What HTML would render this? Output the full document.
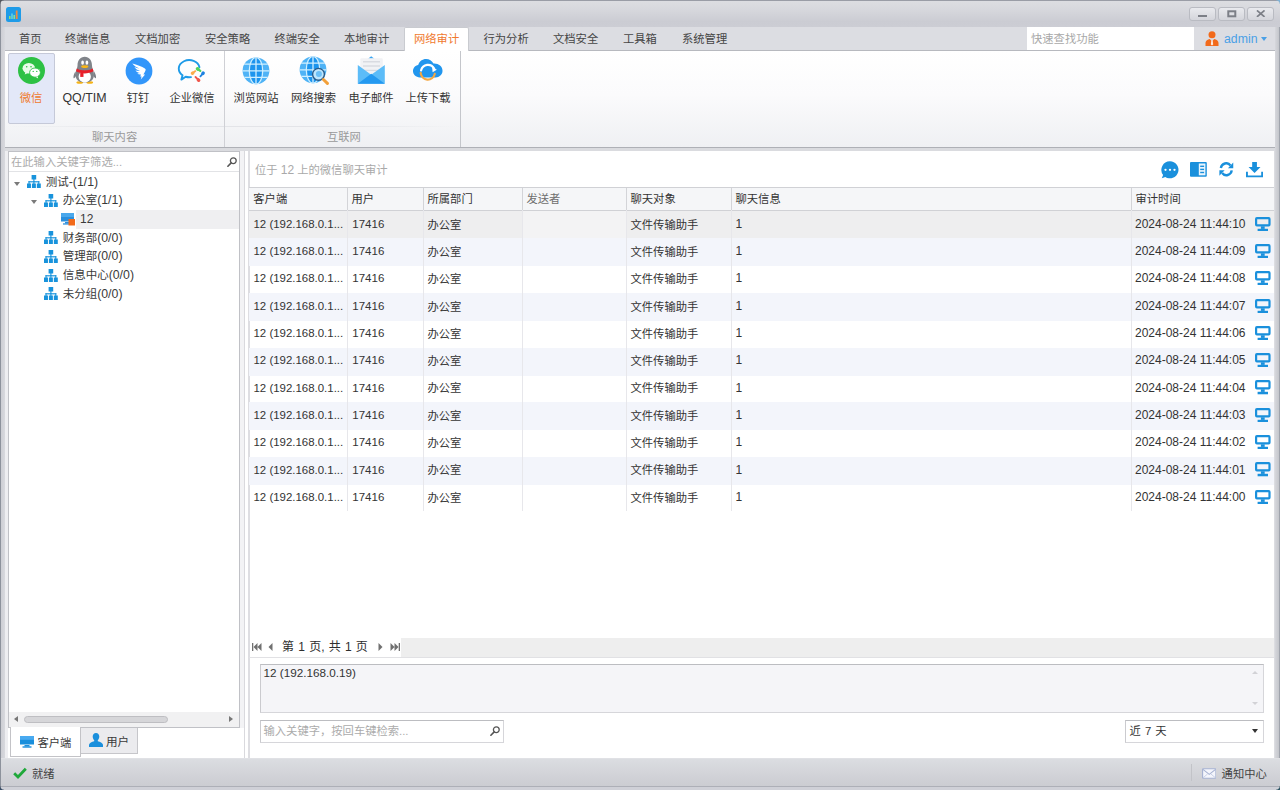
<!DOCTYPE html>
<html lang="zh-CN">
<head>
<meta charset="utf-8">
<title>网络审计 - 微信聊天审计</title>
<style>
*{box-sizing:border-box;margin:0;padding:0}
html,body{width:1280px;height:790px;overflow:hidden}
body{position:relative;background:#d4d5da;font-family:"Liberation Sans","Noto Sans CJK SC",sans-serif;font-size:11.3px;color:#3a3a3a;line-height:1}
div,span,svg{position:absolute}
.t{white-space:nowrap;height:14px;line-height:14px}
.l{font-size:12px}
.s{position:static;font-size:12.300px}
#titlebar{left:0;top:0;width:1280px;height:27px;background:linear-gradient(#dddee2,#d8d9de 30%,#cbccd3 80%,#cccdd4)}
#tabrow{left:5px;top:27px;width:1270px;height:24px;background:#dcdde2;border-bottom:1px solid #b7b9bf}
#tabact{left:404px;top:27px;width:65px;height:24px;background:#fff;border:1px solid #c9cbd0;border-bottom:none;border-radius:2px 2px 0 0}
.tab{top:31.800px;color:#454545}
#ribbon{left:5px;top:51px;width:1270px;height:97px;background:linear-gradient(#ffffff,#fbfbfc 45%,#eff0f3);border-bottom:1px solid #aeb0b6}
.rlabel{top:130px;color:#9a9a9a}
.rbtn{top:91px;color:#333}
.vsep{top:51px;width:1px;height:96px;background:#cfd0d5}
#left{left:8px;top:151px;width:232px;height:577px;background:#fff;border:1px solid #c0c1c6}
#right{left:249px;top:150px;width:1025px;height:608px;background:#fff}
#status{left:0;top:758px;width:1280px;height:32px;background:linear-gradient(#dbdde1,#d2d3d8 50%,#c9cad0);border-top:1px solid #e0e1e5}
.th{top:188px;height:22px;background:#f5f6f8;border-right:1px solid #d5d6da}
.tht{top:192px;color:#333}
.row{left:249px;width:1025px;height:28px}
.c{color:#333}
.csep{top:210px;width:1px;height:301px;background:#e7e7eb}
</style>
</head>
<body>
<div id="titlebar"></div>
<div style="left:0;top:0;width:1280px;height:1px;background:#9a9da6"></div>
<div style="left:0;top:0;width:1px;height:790px;background:#8d929c"></div>
<div style="left:1px;top:27px;width:4px;height:763px;background:linear-gradient(90deg,#cdced4,#d8d9de)"></div>
<div style="left:1275px;top:27px;width:5px;height:763px;background:linear-gradient(90deg,#d6d7dc,#c6c8cd 70%,#8d929c)"></div>
<svg style="left:5.800px;top:6.500px" width="15" height="15" viewBox="0 0 15 15"><rect width="15" height="15" rx="2.5" fill="#1e9be8"/><rect x="3" y="9" width="1.6" height="3" fill="#8fe07a"/><rect x="5.2" y="6.5" width="1.6" height="5.5" fill="#5fd0e8"/><rect x="7.4" y="8" width="1.6" height="4" fill="#7fe0a0"/><rect x="9.8" y="3.5" width="1.8" height="8.5" fill="#f08a3c"/></svg>
<div style="left:1189px;top:7px;width:27px;height:14px;border:1px solid #b9bbc2;border-radius:3px;background:linear-gradient(#e9eaee,#d4d5db)"></div>
<div style="left:1218px;top:7px;width:27px;height:14px;border:1px solid #b9bbc2;border-radius:3px;background:linear-gradient(#e9eaee,#d4d5db)"></div>
<div style="left:1247px;top:7px;width:27px;height:14px;border:1px solid #b9bbc2;border-radius:3px;background:linear-gradient(#e9eaee,#d4d5db)"></div>
<div style="left:1198px;top:14.500px;width:8.500px;height:2px;background:#7c7f87"></div>
<svg style="left:1227px;top:9.700px" width="10" height="8" viewBox="0 0 10 8"><rect x="1.300" y="1.300" width="7" height="5" fill="none" stroke="#7c7f87" stroke-width="2"/></svg>
<svg style="left:1256px;top:9.800px" width="9.500" height="7.300" viewBox="0 0 10 8" preserveAspectRatio="none"><path d="M1 0.5L9 7.5M9 0.5L1 7.5" stroke="#7c7f87" stroke-width="1.900" fill="none"/></svg>
<div id="tabrow"></div>
<div id="tabact"></div>
<span class="t tab" style="left:19px">首页</span>
<span class="t tab" style="left:65px">终端信息</span>
<span class="t tab" style="left:135px">文档加密</span>
<span class="t tab" style="left:205px">安全策略</span>
<span class="t tab" style="left:274.5px">终端安全</span>
<span class="t tab" style="left:344px">本地审计</span>
<span class="t tab" style="left:414px;color:#f0792e">网络审计</span>
<span class="t tab" style="left:483.5px">行为分析</span>
<span class="t tab" style="left:553px">文档安全</span>
<span class="t tab" style="left:623px">工具箱</span>
<span class="t tab" style="left:682px">系统管理</span>
<div style="left:1027px;top:27px;width:167px;height:23px;background:#fff"></div>
<span class="t" style="left:1031px;top:32px;color:#a8a8a8">快速查找功能</span>
<svg style="left:1205px;top:31px" width="14" height="15" viewBox="0 0 14 15"><circle cx="7" cy="3.7" r="3.5" fill="#f26a1b"/><path d="M0.5 15v-3.2c0-2.2 2.2-3.6 4.2-3.9L7 10.2 9.3 7.9c2 .3 4.2 1.700 4.200 3.900V15z" fill="#f26a1b"/><path d="M6.300 9.500h1.400l.5 4-1.200 1-1.200-1z" fill="#fff" opacity=".85"/></svg>
<span class="t" style="left:1224px;top:31.700px;font-size:12.300px;color:#4aa0e6">admin</span>
<div style="left:1261px;top:37px;width:0;height:0;border-left:3.5px solid transparent;border-right:3.5px solid transparent;border-top:4px solid #4aa0e6"></div>
<div id="ribbon"></div>
<div style="left:5px;top:126px;width:455px;height:1px;background:linear-gradient(90deg,rgba(220,221,226,0),#e3e4e8 30%,#e3e4e8 70%,rgba(220,221,226,0))"></div>
<div class="vsep" style="left:224px"></div>
<div class="vsep" style="left:460px;background:#c4c6cb"></div>
<div style="left:8px;top:53px;width:47px;height:71px;background:#e3e8f8;border:1px solid #c5c9d8;border-radius:2px"></div>
<span class="t rbtn" style="left:-9px;width:80px;text-align:center;color:#f0792e">微信</span>
<span class="t rbtn" style="left:44.5px;width:80px;text-align:center;font-size:12.400px">QQ/TIM</span>
<span class="t rbtn" style="left:98px;width:80px;text-align:center">钉钉</span>
<span class="t rbtn" style="left:152px;width:80px;text-align:center">企业微信</span>
<span class="t rbtn" style="left:216px;width:80px;text-align:center">浏览网站</span>
<span class="t rbtn" style="left:273.5px;width:80px;text-align:center">网络搜索</span>
<span class="t rbtn" style="left:331px;width:80px;text-align:center">电子邮件</span>
<span class="t rbtn" style="left:388px;width:80px;text-align:center">上传下载</span>
<span class="t rlabel" style="left:92px">聊天内容</span>
<span class="t rlabel" style="left:327px">互联网</span>
<svg style="left:17px;top:56px" width="29" height="29" viewBox="0 0 29 29"><circle cx="14.500" cy="14.500" r="13.500" fill="#2dc144"/><ellipse cx="11.800" cy="12.200" rx="6.300" ry="5.300" fill="#eafbe9"/><path d="M8.500 16l-.8 2.600 2.900-1.500z" fill="#eafbe9"/><ellipse cx="18" cy="16.600" rx="5.400" ry="4.600" fill="#fff" stroke="#2dc144" stroke-width=".9"/><path d="M20.500 20.300l.7 2.100-2.500-1.300z" fill="#fff"/><circle cx="9.700" cy="10.700" r=".8" fill="#2dc144"/><circle cx="14" cy="10.700" r=".8" fill="#2dc144"/><circle cx="16.200" cy="15.400" r=".7" fill="#2dc144"/><circle cx="19.800" cy="15.400" r=".7" fill="#2dc144"/></svg>
<svg style="left:73px;top:56px" width="23.500" height="28.500" viewBox="0 0 26 29" preserveAspectRatio="none"><ellipse cx="7.500" cy="27" rx="3.800" ry="1.300" fill="#f5b316"/><ellipse cx="18.500" cy="27" rx="3.800" ry="1.300" fill="#f5b316"/><path d="M2.800 15.500c-1.600 2.200-2.600 5-2.200 6.800.5 1 1.800-.5 2.800-2.200z" fill="#7d8187"/><path d="M23.200 15.500c1.600 2.200 2.600 5 2.200 6.800-.5 1-1.800-.5-2.800-2.200z" fill="#7d8187"/><path d="M13 .8c5 0 8 3.800 8 8.700 0 1.500.5 3 1.300 5 1.200 3 1.400 6.500-.4 9.200-1.700 2.400-5 3.300-8.900 3.300s-7.200-.9-8.900-3.300c-1.800-2.700-1.600-6.200-.4-9.200.8-2 1.300-3.500 1.300-5C5 4.600 8 .8 13 .8z" fill="#80848a"/><ellipse cx="13" cy="21" rx="6.800" ry="6" fill="#fff"/><ellipse cx="10.600" cy="6.800" rx="1.500" ry="2.200" fill="#fff"/><ellipse cx="15.400" cy="6.800" rx="1.500" ry="2.200" fill="#fff"/><ellipse cx="13" cy="10.800" rx="4" ry="1.500" fill="#f8b616"/><path d="M4.200 12.600c3 1.500 6 2 8.800 2s5.800-.5 8.800-2l.9 3c-3 1.500-6.500 2.100-9.700 2.100s-6.700-.6-9.700-2.100z" fill="#e8202a"/><path d="M8 16.700h3.600v4.600H8z" fill="#e8202a"/></svg>
<svg style="left:124.700px;top:56.500px" width="28" height="28" viewBox="0 0 28 28"><circle cx="14" cy="14" r="13.400" fill="#3296fa"/><path d="M7.300 6.600c4.500 1.300 9.600 3.200 12.600 4.900.8.500.9 1.100.6 1.900-.5 1.300-1.300 2.900-2.100 4.200h1.700l-4.300 5 .8-3.200h-1.400l.8-1.900c-1.200.3-2.600 0-3.800-1 1.100 0 2.200-.2 3-.5-1.800-.1-3.600-.8-4.800-2.400 1.600.4 3.300.5 4.700.3-2.500-.6-4.600-1.900-5.700-3.900 1.500.8 3.400 1.400 5 1.600-2.800-1.200-5.500-2.800-7.100-5z" fill="#fff"/></svg>
<svg style="left:177px;top:58px" width="29" height="26" viewBox="0 0 29 26"><path d="M22.440 9.200A10.400 8.600 0 1 0 5.520 17.290L4.400 21.600 8.640 18.780A10.400 8.600 0 0 0 14 19.170" fill="none" stroke="#1e9be8" stroke-width="1.900" stroke-linecap="round" stroke-linejoin="round"/><g stroke-linecap="round" fill="none"><path d="M20.800 11L23.300 12.900" stroke="#52d45c" stroke-width="2.300"/><path d="M20.400 10.700L20.900 11.100" stroke="#52d45c" stroke-width="3.400"/><path d="M26.300 15.200L23.400 18.300" stroke="#1e82e0" stroke-width="1.800"/><path d="M26.200 15.100L25.900 15.500" stroke="#1e82e0" stroke-width="3.400"/><path d="M21.600 22.200L18.500 19" stroke="#f0574c" stroke-width="1.800"/><path d="M21.700 22.300L21.300 21.900" stroke="#f0574c" stroke-width="3.400"/><path d="M15.500 15.200L18.400 13.100" stroke="#fbab4a" stroke-width="1.800"/><path d="M15.400 15.300L15.800 15" stroke="#fbab4a" stroke-width="3.400"/></g></svg>
<svg style="left:242.4px;top:56.6px" width="30" height="30" viewBox="0 0 30 30"><defs><clipPath id="g242"><circle cx="14" cy="13.800" r="13.400"/></clipPath></defs><circle cx="14" cy="13.800" r="13.400" fill="#4fb3f6"/><g clip-path="url(#g242)"><ellipse cx="14" cy="13.800" rx="6.700" ry="13.400" fill="#1d95ee"/><g stroke="#cfefff" stroke-width="1.300" fill="none"><path d="M0 13.800h28M14 0v28M1 7.200h26M1 20.400h26"/><ellipse cx="14" cy="13.800" rx="6.700" ry="13.400"/></g></g></svg>
<svg style="left:298.6px;top:56.4px" width="30" height="30" viewBox="0 0 30 30"><defs><clipPath id="g298"><circle cx="14" cy="13.800" r="13.400"/></clipPath></defs><circle cx="14" cy="13.800" r="13.400" fill="#4fb3f6"/><g clip-path="url(#g298)"><ellipse cx="14" cy="13.800" rx="6.700" ry="13.400" fill="#1d95ee"/><g stroke="#cfefff" stroke-width="1.300" fill="none"><path d="M0 13.800h28M14 0v28M1 7.200h26M1 20.400h26"/><ellipse cx="14" cy="13.800" rx="6.700" ry="13.400"/></g></g><circle cx="19.500" cy="18.300" r="5.900" fill="#bfe6fd" stroke="#2a5a88" stroke-width="1.400"/><circle cx="19.900" cy="18.100" r="3" fill="#6cc0f7"/><path d="M24.400 23.500l4 3.900" stroke="#f2a03a" stroke-width="3" stroke-linecap="round"/></svg>
<svg style="left:357px;top:55px" width="29" height="30" viewBox="0 0 29 30"><path d="M14.200 1.200L17.400 3.800h-6.400z" fill="#3aa5f2"/><rect x="3.300" y="3.300" width="22.500" height="19" rx="1.200" fill="#f1f2f5"/><path d="M6 6.800h17M6 11h17M6 15.400h17" stroke="#d9dbe1" stroke-width="1.400"/><path d="M.8 10l13.400 9.800 13.600-9.800v18.700H.8z" fill="#5cbcf8"/><path d="M.8 28.700l13.400-9.900 13.600 9.900z" fill="#2499f0"/></svg>
<svg style="left:412.300px;top:58.300px" width="31.500" height="26.200" viewBox="0 0 32 25" preserveAspectRatio="none"><path d="M8 18.500c-4 0-7-2.600-7-6 0-3 2.300-5.300 5.300-5.800C7.400 3.200 10.500 1 14.300 1c3.300 0 6.100 1.700 7.500 4.300 4.800-.4 9.200 2.600 9.200 6.800 0 3.700-3.300 6.400-7 6.400z" fill="#2196ee"/><path d="M8.800 14.200a7.300 7.300 0 0 0 14.300 1" fill="none" stroke="#f5a742" stroke-width="2.200" stroke-linecap="round"/><path d="M9.200 11.800a7.300 7.300 0 0 1 13.300-1.600" fill="none" stroke="#fff" stroke-width="2.200" stroke-linecap="round"/><path d="M20.500 8.500l4.700 2.700-4.300 2.500z" fill="#fff"/></svg>
<div style="left:5px;top:148px;width:1270px;height:3px;background:#dadbdf"></div>
<div style="left:5px;top:151px;width:1270px;height:607.500px;background:#fff"></div>
<div style="left:5px;top:151px;width:3px;height:607px;background:#eeeef1"></div>
<div id="left"></div>
<div style="left:9px;top:171px;width:230px;height:1px;background:#e2e3e6"></div>
<span class="t" style="left:11px;top:155px;color:#acacac">在此输入关键字筛选...</span>
<svg style="left:226.700px;top:156.800px" width="10" height="10" viewBox="0 0 10 10"><circle cx="6.300" cy="3.700" r="2.900" fill="none" stroke="#555" stroke-width="1.300"/><path d="M4.200 5.900L.9 9.200" stroke="#555" stroke-width="1.600" stroke-linecap="round"/></svg>
<div style="left:76px;top:210px;width:163px;height:19px;background:#efeff1"></div>
<svg style="left:27px;top:175px" width="13.800" height="13" viewBox="0 0 15 13" preserveAspectRatio="none"><g fill="#1893dc"><rect x="5" y="0" width="5" height="4.500"/><rect x="0" y="8.500" width="4.300" height="4.500"/><rect x="5.350" y="8.500" width="4.300" height="4.500"/><rect x="10.700" y="8.500" width="4.300" height="4.500"/><rect x="6.900" y="4" width="1.200" height="3"/><rect x="1.600" y="6.200" width="11.800" height="1.200"/><rect x="1.600" y="6.200" width="1.200" height="3"/><rect x="12.200" y="6.200" width="1.200" height="3"/><rect x="6.900" y="6.200" width="1.200" height="3"/></g></svg>
<div style="left:13.5px;top:181.5px;width:0;height:0;border-left:3.500px solid transparent;border-right:3.500px solid transparent;border-top:4px solid #7a7a7a"></div>
<span class="t" style="left:45.7px;top:174.5px;font-size:11.500px">测试<span class="s">-(1/1)</span></span>
<svg style="left:44px;top:193.7px" width="13.800" height="13" viewBox="0 0 15 13" preserveAspectRatio="none"><g fill="#1893dc"><rect x="5" y="0" width="5" height="4.500"/><rect x="0" y="8.500" width="4.300" height="4.500"/><rect x="5.350" y="8.500" width="4.300" height="4.500"/><rect x="10.700" y="8.500" width="4.300" height="4.500"/><rect x="6.900" y="4" width="1.200" height="3"/><rect x="1.600" y="6.200" width="11.800" height="1.200"/><rect x="1.600" y="6.200" width="1.200" height="3"/><rect x="12.200" y="6.200" width="1.200" height="3"/><rect x="6.900" y="6.200" width="1.200" height="3"/></g></svg>
<div style="left:30.5px;top:200.2px;width:0;height:0;border-left:3.500px solid transparent;border-right:3.500px solid transparent;border-top:4px solid #7a7a7a"></div>
<span class="t" style="left:62.7px;top:193.2px;font-size:11.500px">办公室<span class="s">(1/1)</span></span>
<svg style="left:44px;top:231.2px" width="13.800" height="13" viewBox="0 0 15 13" preserveAspectRatio="none"><g fill="#1893dc"><rect x="5" y="0" width="5" height="4.500"/><rect x="0" y="8.500" width="4.300" height="4.500"/><rect x="5.350" y="8.500" width="4.300" height="4.500"/><rect x="10.700" y="8.500" width="4.300" height="4.500"/><rect x="6.900" y="4" width="1.200" height="3"/><rect x="1.600" y="6.200" width="11.800" height="1.200"/><rect x="1.600" y="6.200" width="1.200" height="3"/><rect x="12.200" y="6.200" width="1.200" height="3"/><rect x="6.900" y="6.200" width="1.200" height="3"/></g></svg>
<span class="t" style="left:62.7px;top:230.7px;font-size:11.500px">财务部<span class="s">(0/0)</span></span>
<svg style="left:44px;top:249.9px" width="13.800" height="13" viewBox="0 0 15 13" preserveAspectRatio="none"><g fill="#1893dc"><rect x="5" y="0" width="5" height="4.500"/><rect x="0" y="8.500" width="4.300" height="4.500"/><rect x="5.350" y="8.500" width="4.300" height="4.500"/><rect x="10.700" y="8.500" width="4.300" height="4.500"/><rect x="6.900" y="4" width="1.200" height="3"/><rect x="1.600" y="6.200" width="11.800" height="1.200"/><rect x="1.600" y="6.200" width="1.200" height="3"/><rect x="12.200" y="6.200" width="1.200" height="3"/><rect x="6.900" y="6.200" width="1.200" height="3"/></g></svg>
<span class="t" style="left:62.7px;top:249.4px;font-size:11.500px">管理部<span class="s">(0/0)</span></span>
<svg style="left:44px;top:268.6px" width="13.800" height="13" viewBox="0 0 15 13" preserveAspectRatio="none"><g fill="#1893dc"><rect x="5" y="0" width="5" height="4.500"/><rect x="0" y="8.500" width="4.300" height="4.500"/><rect x="5.350" y="8.500" width="4.300" height="4.500"/><rect x="10.700" y="8.500" width="4.300" height="4.500"/><rect x="6.900" y="4" width="1.200" height="3"/><rect x="1.600" y="6.200" width="11.800" height="1.200"/><rect x="1.600" y="6.200" width="1.200" height="3"/><rect x="12.200" y="6.200" width="1.200" height="3"/><rect x="6.900" y="6.200" width="1.200" height="3"/></g></svg>
<span class="t" style="left:62.7px;top:268.1px;font-size:11.500px">信息中心<span class="s">(0/0)</span></span>
<svg style="left:44px;top:287.3px" width="13.800" height="13" viewBox="0 0 15 13" preserveAspectRatio="none"><g fill="#1893dc"><rect x="5" y="0" width="5" height="4.500"/><rect x="0" y="8.500" width="4.300" height="4.500"/><rect x="5.350" y="8.500" width="4.300" height="4.500"/><rect x="10.700" y="8.500" width="4.300" height="4.500"/><rect x="6.900" y="4" width="1.200" height="3"/><rect x="1.600" y="6.200" width="11.800" height="1.200"/><rect x="1.600" y="6.200" width="1.200" height="3"/><rect x="12.200" y="6.200" width="1.200" height="3"/><rect x="6.900" y="6.200" width="1.200" height="3"/></g></svg>
<span class="t" style="left:62.7px;top:286.8px;font-size:11.500px">未分组<span class="s">(0/0)</span></span>
<svg style="left:61px;top:213px" width="14" height="13" viewBox="0 0 14 13"><rect x="0" y="0" width="13" height="8.500" fill="#2a8fdd"/><rect x="0" y="0" width="13" height="4" fill="#4aa8ec"/><rect x="4" y="9" width="5" height="1.500" fill="#2a8fdd"/><rect x="2" y="10.300" width="9" height="1.300" fill="#2a8fdd"/><rect x="7.500" y="6" width="6.500" height="6.500" fill="#f26a1b"/></svg>
<span class="t l" style="left:80px;top:212px">12</span>
<div style="left:9px;top:712px;width:230px;height:15px;background:#f1f1f2"></div>
<div style="left:24px;top:716px;width:144px;height:7px;background:#d6d6d9;border:1px solid #bebec2;border-radius:4px"></div>
<div style="left:14px;top:716px;width:0;height:0;border-top:3.500px solid transparent;border-bottom:3.500px solid transparent;border-right:4px solid #777"></div>
<div style="left:229px;top:716px;width:0;height:0;border-top:3.500px solid transparent;border-bottom:3.500px solid transparent;border-left:4px solid #777"></div>
<div style="left:80px;top:728px;width:58px;height:26px;background:#ebebee;border:1px solid #c6c6ca;border-top:none"></div>
<div style="left:10px;top:727px;width:71px;height:29.500px;background:#fff;border:1px solid #c3c3c7;border-top:none"></div>
<svg style="left:20px;top:736px" width="14" height="12" viewBox="0 0 14 12"><rect x="0" y="0" width="14" height="8.500" fill="#1a8fdc"/><rect x="0" y="0" width="14" height="3.800" fill="#49aaf0"/><rect x="4.500" y="9" width="5" height="1.500" fill="#1a8fdc"/><rect x="2.500" y="10.300" width="9" height="1.400" fill="#1a8fdc"/></svg>
<span class="t" style="left:37.500px;top:736px">客户端</span>
<svg style="left:89px;top:733px" width="14" height="14" viewBox="0 0 14 14"><path d="M7 0c2 0 3.300 1.500 3.300 3.600 0 1.500-.6 2.900-1.500 3.700v1c2.400.6 4.700 1.800 5.200 3.500V14H0v-2.200c.5-1.700 2.800-2.900 5.200-3.500v-1C4.300 6.500 3.700 5.100 3.700 3.600 3.700 1.500 5 0 7 0z" fill="#1a8fdc"/></svg>
<span class="t" style="left:106px;top:734.500px;font-size:11.600px">用户</span>
<div style="left:240px;top:151px;width:4px;height:577px;background:#f3f3f5"></div>
<div style="left:244px;top:151px;width:1px;height:607px;background:#d9d9dd"></div>
<div style="left:248px;top:151px;width:1.500px;height:607px;background:#dedee2"></div>
<div style="left:1274px;top:151px;width:1px;height:607px;background:#dcdde1"></div>
<span class="t" style="left:255px;top:162.500px;color:#a9a9a9">位于 <span class="l" style="position:static">12</span> 上的微信聊天审计</span>
<svg style="left:1161px;top:161px" width="18" height="18" viewBox="0 0 18 18"><path d="M9 .3a8.500 8.500 0 1 1-4.700 15.600L.8 17.200l1.300-3.300A8.500 8.500 0 0 1 9 .3z" fill="#1a90dc"/><circle cx="4.500" cy="8.800" r="1.150" fill="#fff"/><circle cx="9" cy="8.800" r="1.150" fill="#fff"/><circle cx="13.500" cy="8.800" r="1.150" fill="#fff"/></svg>
<svg style="left:1189.800px;top:162px" width="17" height="15" viewBox="0 0 17 15"><rect x="0" y="0" width="16.800" height="14.800" rx="1" fill="#1a90dc"/><rect x="8.800" y="1.500" width="6.600" height="11.800" fill="#eaf5fd"/><g fill="#1a90dc"><rect x="10.200" y="3.600" width="3.900" height="1.400"/><rect x="10.200" y="6.700" width="3.900" height="1.400"/><rect x="10.200" y="9.800" width="3.900" height="1.400"/></g></svg>
<svg style="left:1219px;top:162.300px" width="14.600" height="14.400" viewBox="0 0 16 15" preserveAspectRatio="none"><g fill="none" stroke="#1a90dc" stroke-width="2.600"><path d="M2 6.300A6 6 0 0 1 12.600 3.600"/><path d="M14 8.700A6 6 0 0 1 3.400 11.400"/></g><path d="M15.600 .6v5.800H9.800z" fill="#1a90dc"/><path d="M.4 14.400V8.600h5.800z" fill="#1a90dc"/></svg>
<svg style="left:1245.800px;top:162px" width="17.100" height="15.700" viewBox="0 0 18 17" preserveAspectRatio="none"><path d="M6.500 0h5v5.500h3.800L9 11.800 2.700 5.500h3.800z" fill="#1a90dc"/><path d="M1 10.500v5h16v-5" fill="none" stroke="#1a90dc" stroke-width="2"/></svg>
<div style="left:249px;top:187px;width:1025px;height:1px;background:#d0d1d5"></div>
<div style="left:249px;top:188px;width:1025px;height:22px;background:#f5f6f8"></div>
<div style="left:249px;top:210px;width:1025px;height:1px;background:#d0d1d5"></div>
<div style="left:347px;top:188px;width:1px;height:22px;background:#d3d4d8"></div>
<div class="csep" style="left:347px"></div>
<div style="left:423px;top:188px;width:1px;height:22px;background:#d3d4d8"></div>
<div class="csep" style="left:423px"></div>
<div style="left:522px;top:188px;width:1px;height:22px;background:#d3d4d8"></div>
<div class="csep" style="left:522px"></div>
<div style="left:626px;top:188px;width:1px;height:22px;background:#d3d4d8"></div>
<div class="csep" style="left:626px"></div>
<div style="left:731px;top:188px;width:1px;height:22px;background:#d3d4d8"></div>
<div class="csep" style="left:731px"></div>
<div style="left:1131px;top:188px;width:1px;height:22px;background:#d3d4d8"></div>
<div class="csep" style="left:1131px"></div>
<div class="row" style="top:211.0px;background:#eeeeef"></div>
<div class="row" style="top:238.3px;background:#f3f5fb"></div>
<div class="row" style="top:293.0px;background:#f3f5fb"></div>
<div class="row" style="top:347.6px;background:#f3f5fb"></div>
<div class="row" style="top:402.2px;background:#f3f5fb"></div>
<div class="row" style="top:456.9px;background:#f3f5fb"></div>
<div style="left:523px;top:211px;width:103px;height:27px;background:rgba(255,255,255,.3)"></div>
<span class="t tht" style="left:253.3px">客户端</span>
<div class="csep" style="left:347px"></div>
<span class="t tht" style="left:351.5px">用户</span>
<div class="csep" style="left:423px"></div>
<span class="t tht" style="left:427.5px">所属部门</span>
<div class="csep" style="left:522px"></div>
<span class="t tht" style="left:526.5px;color:#6e6e6e">发送者</span>
<div class="csep" style="left:626px"></div>
<span class="t tht" style="left:630.5px">聊天对象</span>
<div class="csep" style="left:731px"></div>
<span class="t tht" style="left:735.5px">聊天信息</span>
<div class="csep" style="left:1131px"></div>
<span class="t tht" style="left:1135.5px">审计时间</span>
<span class="t c" style="left:253.500px;top:216.8px;font-size:11.450px">12 (192.168.0.1...</span><span class="t c" style="left:352.300px;top:216.8px;font-size:11.500px">17416</span><span class="t c" style="left:427.500px;top:217.5px">办公室</span><span class="t c" style="left:630.500px;top:217.5px">文件传输助手</span><span class="t l c" style="left:735.500px;top:216.8px">1</span><span class="t l c" style="left:1135px;top:216.8px">2024-08-24 11:44:10</span>
<svg style="left:1255px;top:216.5px" width="15.600" height="14.400" viewBox="0 0 15.600 14.400"><rect x="1.100" y="1.100" width="13.400" height="7.300" rx=".8" fill="none" stroke="#1a90dc" stroke-width="2.200"/><rect x="5.900" y="9.300" width="3.800" height="2.600" fill="#1a90dc"/><rect x="2.600" y="11.800" width="10.400" height="2.500" fill="#1a90dc"/></svg>
<span class="t c" style="left:253.500px;top:244.1px;font-size:11.450px">12 (192.168.0.1...</span><span class="t c" style="left:352.300px;top:244.1px;font-size:11.500px">17416</span><span class="t c" style="left:427.500px;top:244.8px">办公室</span><span class="t c" style="left:630.500px;top:244.8px">文件传输助手</span><span class="t l c" style="left:735.500px;top:244.1px">1</span><span class="t l c" style="left:1135px;top:244.1px">2024-08-24 11:44:09</span>
<svg style="left:1255px;top:243.8px" width="15.600" height="14.400" viewBox="0 0 15.600 14.400"><rect x="1.100" y="1.100" width="13.400" height="7.300" rx=".8" fill="none" stroke="#1a90dc" stroke-width="2.200"/><rect x="5.900" y="9.300" width="3.800" height="2.600" fill="#1a90dc"/><rect x="2.600" y="11.800" width="10.400" height="2.500" fill="#1a90dc"/></svg>
<span class="t c" style="left:253.500px;top:271.4px;font-size:11.450px">12 (192.168.0.1...</span><span class="t c" style="left:352.300px;top:271.4px;font-size:11.500px">17416</span><span class="t c" style="left:427.500px;top:272.1px">办公室</span><span class="t c" style="left:630.500px;top:272.1px">文件传输助手</span><span class="t l c" style="left:735.500px;top:271.4px">1</span><span class="t l c" style="left:1135px;top:271.4px">2024-08-24 11:44:08</span>
<svg style="left:1255px;top:271.1px" width="15.600" height="14.400" viewBox="0 0 15.600 14.400"><rect x="1.100" y="1.100" width="13.400" height="7.300" rx=".8" fill="none" stroke="#1a90dc" stroke-width="2.200"/><rect x="5.900" y="9.300" width="3.800" height="2.600" fill="#1a90dc"/><rect x="2.600" y="11.800" width="10.400" height="2.500" fill="#1a90dc"/></svg>
<span class="t c" style="left:253.500px;top:298.8px;font-size:11.450px">12 (192.168.0.1...</span><span class="t c" style="left:352.300px;top:298.8px;font-size:11.500px">17416</span><span class="t c" style="left:427.500px;top:299.5px">办公室</span><span class="t c" style="left:630.500px;top:299.5px">文件传输助手</span><span class="t l c" style="left:735.500px;top:298.8px">1</span><span class="t l c" style="left:1135px;top:298.8px">2024-08-24 11:44:07</span>
<svg style="left:1255px;top:298.5px" width="15.600" height="14.400" viewBox="0 0 15.600 14.400"><rect x="1.100" y="1.100" width="13.400" height="7.300" rx=".8" fill="none" stroke="#1a90dc" stroke-width="2.200"/><rect x="5.900" y="9.300" width="3.800" height="2.600" fill="#1a90dc"/><rect x="2.600" y="11.800" width="10.400" height="2.500" fill="#1a90dc"/></svg>
<span class="t c" style="left:253.500px;top:326.1px;font-size:11.450px">12 (192.168.0.1...</span><span class="t c" style="left:352.300px;top:326.1px;font-size:11.500px">17416</span><span class="t c" style="left:427.500px;top:326.8px">办公室</span><span class="t c" style="left:630.500px;top:326.8px">文件传输助手</span><span class="t l c" style="left:735.500px;top:326.1px">1</span><span class="t l c" style="left:1135px;top:326.1px">2024-08-24 11:44:06</span>
<svg style="left:1255px;top:325.8px" width="15.600" height="14.400" viewBox="0 0 15.600 14.400"><rect x="1.100" y="1.100" width="13.400" height="7.300" rx=".8" fill="none" stroke="#1a90dc" stroke-width="2.200"/><rect x="5.900" y="9.300" width="3.800" height="2.600" fill="#1a90dc"/><rect x="2.600" y="11.800" width="10.400" height="2.500" fill="#1a90dc"/></svg>
<span class="t c" style="left:253.500px;top:353.4px;font-size:11.450px">12 (192.168.0.1...</span><span class="t c" style="left:352.300px;top:353.4px;font-size:11.500px">17416</span><span class="t c" style="left:427.500px;top:354.1px">办公室</span><span class="t c" style="left:630.500px;top:354.1px">文件传输助手</span><span class="t l c" style="left:735.500px;top:353.4px">1</span><span class="t l c" style="left:1135px;top:353.4px">2024-08-24 11:44:05</span>
<svg style="left:1255px;top:353.1px" width="15.600" height="14.400" viewBox="0 0 15.600 14.400"><rect x="1.100" y="1.100" width="13.400" height="7.300" rx=".8" fill="none" stroke="#1a90dc" stroke-width="2.200"/><rect x="5.900" y="9.300" width="3.800" height="2.600" fill="#1a90dc"/><rect x="2.600" y="11.800" width="10.400" height="2.500" fill="#1a90dc"/></svg>
<span class="t c" style="left:253.500px;top:380.7px;font-size:11.450px">12 (192.168.0.1...</span><span class="t c" style="left:352.300px;top:380.7px;font-size:11.500px">17416</span><span class="t c" style="left:427.500px;top:381.4px">办公室</span><span class="t c" style="left:630.500px;top:381.4px">文件传输助手</span><span class="t l c" style="left:735.500px;top:380.7px">1</span><span class="t l c" style="left:1135px;top:380.7px">2024-08-24 11:44:04</span>
<svg style="left:1255px;top:380.4px" width="15.600" height="14.400" viewBox="0 0 15.600 14.400"><rect x="1.100" y="1.100" width="13.400" height="7.300" rx=".8" fill="none" stroke="#1a90dc" stroke-width="2.200"/><rect x="5.900" y="9.300" width="3.800" height="2.600" fill="#1a90dc"/><rect x="2.600" y="11.800" width="10.400" height="2.500" fill="#1a90dc"/></svg>
<span class="t c" style="left:253.500px;top:408.0px;font-size:11.450px">12 (192.168.0.1...</span><span class="t c" style="left:352.300px;top:408.0px;font-size:11.500px">17416</span><span class="t c" style="left:427.500px;top:408.7px">办公室</span><span class="t c" style="left:630.500px;top:408.7px">文件传输助手</span><span class="t l c" style="left:735.500px;top:408.0px">1</span><span class="t l c" style="left:1135px;top:408.0px">2024-08-24 11:44:03</span>
<svg style="left:1255px;top:407.7px" width="15.600" height="14.400" viewBox="0 0 15.600 14.400"><rect x="1.100" y="1.100" width="13.400" height="7.300" rx=".8" fill="none" stroke="#1a90dc" stroke-width="2.200"/><rect x="5.900" y="9.300" width="3.800" height="2.600" fill="#1a90dc"/><rect x="2.600" y="11.800" width="10.400" height="2.500" fill="#1a90dc"/></svg>
<span class="t c" style="left:253.500px;top:435.4px;font-size:11.450px">12 (192.168.0.1...</span><span class="t c" style="left:352.300px;top:435.4px;font-size:11.500px">17416</span><span class="t c" style="left:427.500px;top:436.1px">办公室</span><span class="t c" style="left:630.500px;top:436.1px">文件传输助手</span><span class="t l c" style="left:735.500px;top:435.4px">1</span><span class="t l c" style="left:1135px;top:435.4px">2024-08-24 11:44:02</span>
<svg style="left:1255px;top:435.1px" width="15.600" height="14.400" viewBox="0 0 15.600 14.400"><rect x="1.100" y="1.100" width="13.400" height="7.300" rx=".8" fill="none" stroke="#1a90dc" stroke-width="2.200"/><rect x="5.900" y="9.300" width="3.800" height="2.600" fill="#1a90dc"/><rect x="2.600" y="11.800" width="10.400" height="2.500" fill="#1a90dc"/></svg>
<span class="t c" style="left:253.500px;top:462.7px;font-size:11.450px">12 (192.168.0.1...</span><span class="t c" style="left:352.300px;top:462.7px;font-size:11.500px">17416</span><span class="t c" style="left:427.500px;top:463.4px">办公室</span><span class="t c" style="left:630.500px;top:463.4px">文件传输助手</span><span class="t l c" style="left:735.500px;top:462.7px">1</span><span class="t l c" style="left:1135px;top:462.7px">2024-08-24 11:44:01</span>
<svg style="left:1255px;top:462.4px" width="15.600" height="14.400" viewBox="0 0 15.600 14.400"><rect x="1.100" y="1.100" width="13.400" height="7.300" rx=".8" fill="none" stroke="#1a90dc" stroke-width="2.200"/><rect x="5.900" y="9.300" width="3.800" height="2.600" fill="#1a90dc"/><rect x="2.600" y="11.800" width="10.400" height="2.500" fill="#1a90dc"/></svg>
<span class="t c" style="left:253.500px;top:490.0px;font-size:11.450px">12 (192.168.0.1...</span><span class="t c" style="left:352.300px;top:490.0px;font-size:11.500px">17416</span><span class="t c" style="left:427.500px;top:490.7px">办公室</span><span class="t c" style="left:630.500px;top:490.7px">文件传输助手</span><span class="t l c" style="left:735.500px;top:490.0px">1</span><span class="t l c" style="left:1135px;top:490.0px">2024-08-24 11:44:00</span>
<svg style="left:1255px;top:489.7px" width="15.600" height="14.400" viewBox="0 0 15.600 14.400"><rect x="1.100" y="1.100" width="13.400" height="7.300" rx=".8" fill="none" stroke="#1a90dc" stroke-width="2.200"/><rect x="5.900" y="9.300" width="3.800" height="2.600" fill="#1a90dc"/><rect x="2.600" y="11.800" width="10.400" height="2.500" fill="#1a90dc"/></svg>
<div style="left:401px;top:638px;width:873px;height:19px;background:#eeeeee"></div>
<div style="left:249px;top:657px;width:1025px;height:1px;background:#e1e1e4"></div>
<svg style="left:252px;top:643px" width="10" height="8" viewBox="0 0 10 8"><rect x="0" y="0" width="1.300" height="8" fill="#707070"/><path d="M5.500 0v8L1.500 4zM9.500 0v8L5.500 4z" fill="#707070"/></svg>
<svg style="left:268px;top:643px" width="5" height="8" viewBox="0 0 5 8"><path d="M4.500 0v8L.5 4z" fill="#707070"/></svg>
<span class="t" style="left:282px;top:640px;color:#2e2e2e;font-size:12px;word-spacing:0.900px">第 1 页, 共 1 页</span>
<svg style="left:378px;top:643px" width="5" height="8" viewBox="0 0 5 8"><path d="M.5 0v8L4.500 4z" fill="#707070"/></svg>
<svg style="left:390px;top:643px" width="10" height="8" viewBox="0 0 10 8"><rect x="8.700" y="0" width="1.300" height="8" fill="#707070"/><path d="M.5 0v8L4.500 4zM4.500 0v8L8.500 4z" fill="#707070"/></svg>
<div style="left:260px;top:664px;width:1004px;height:49px;background:#f5f5f8;border:1px solid #d6d6da;border-top-color:#bcbdc1;border-left-color:#cbcbcf"></div>
<span class="t" style="left:263.500px;top:665.700px;font-size:11.700px;color:#333">12 (192.168.0.19)</span>
<div style="left:1252px;top:671px;width:0;height:0;border-left:3px solid transparent;border-right:3px solid transparent;border-bottom:3.500px solid #d2d2d6"></div>
<div style="left:1252px;top:702px;width:0;height:0;border-left:3px solid transparent;border-right:3px solid transparent;border-top:3.500px solid #d2d2d6"></div>
<div style="left:260px;top:720px;width:244px;height:22.500px;background:#fff;border:1px solid #d6d6da;border-top-color:#bcbdc1;border-left-color:#cbcbcf"></div>
<span class="t" style="left:263.500px;top:724px;color:#ababab;font-size:11.300px">输入关键字，按回车键检索...</span>
<svg style="left:490.100px;top:726.300px" width="10" height="10" viewBox="0 0 10 10"><circle cx="6.300" cy="3.700" r="2.900" fill="none" stroke="#555" stroke-width="1.300"/><path d="M4.200 5.900L.9 9.200" stroke="#555" stroke-width="1.600" stroke-linecap="round"/></svg>
<div style="left:1125px;top:720px;width:139px;height:22.500px;background:#fff;border:1px solid #d6d6da;border-top-color:#bcbdc1;border-left-color:#cbcbcf"></div>
<span class="t" style="left:1129.500px;top:724px;color:#333;word-spacing:1px">近 7 天</span>
<div style="left:1252px;top:729px;width:0;height:0;border-left:3.500px solid transparent;border-right:3.500px solid transparent;border-top:4px solid #333"></div>
<div id="status"></div>
<div style="left:0;top:786px;width:1280px;height:1px;background:#adafb7"></div>
<div style="left:0;top:787px;width:1280px;height:3px;background:#cfd0d7"></div>
<svg style="left:13px;top:767px" width="14" height="12" viewBox="0 0 14 12"><path d="M1.200 6.200L5 10 12.800 1.800" fill="none" stroke="#1fa83a" stroke-width="2.800"/></svg>
<span class="t" style="left:32px;top:767px;color:#444">就绪</span>
<div style="left:1191px;top:764px;width:1px;height:17px;background:#c2c3c8"></div>
<svg style="left:1201.800px;top:767.600px" width="14.500" height="11" viewBox="0 0 15 11"><rect x=".6" y=".6" width="13.800" height="9.800" rx=".8" fill="#f5f6fc" stroke="#a7b2d2" stroke-width="1.200"/><path d="M1 1.200l6.500 5.200 6.500-5.200" fill="none" stroke="#a7b2d2" stroke-width="1.100"/><path d="M1 10l4.800-4M14 10L9.200 6" fill="none" stroke="#c3cbe2" stroke-width=".9"/></svg>
<span class="t" style="left:1221.600px;top:767.300px;color:#444">通知中心</span>
<div style="left:0;top:0;width:1px;height:790px;background:#8d929c"></div>
<div style="left:0;top:0;width:4px;height:4px;background:radial-gradient(circle at 100% 100%,rgba(0,0,0,0) 3.200px,#55585f 4.200px)"></div>
<div style="left:1276px;top:0;width:4px;height:4px;background:radial-gradient(circle at 0 100%,rgba(0,0,0,0) 3.200px,#7fb2d6 4.200px)"></div>
<div style="left:0;top:786px;width:4px;height:4px;background:radial-gradient(circle at 100% 0,rgba(0,0,0,0) 3.200px,#3d5068 4.200px)"></div>
<div style="left:1276px;top:786px;width:4px;height:4px;background:radial-gradient(circle at 0 0,rgba(0,0,0,0) 3.200px,#2f5766 4.200px)"></div>
</body>
</html>
